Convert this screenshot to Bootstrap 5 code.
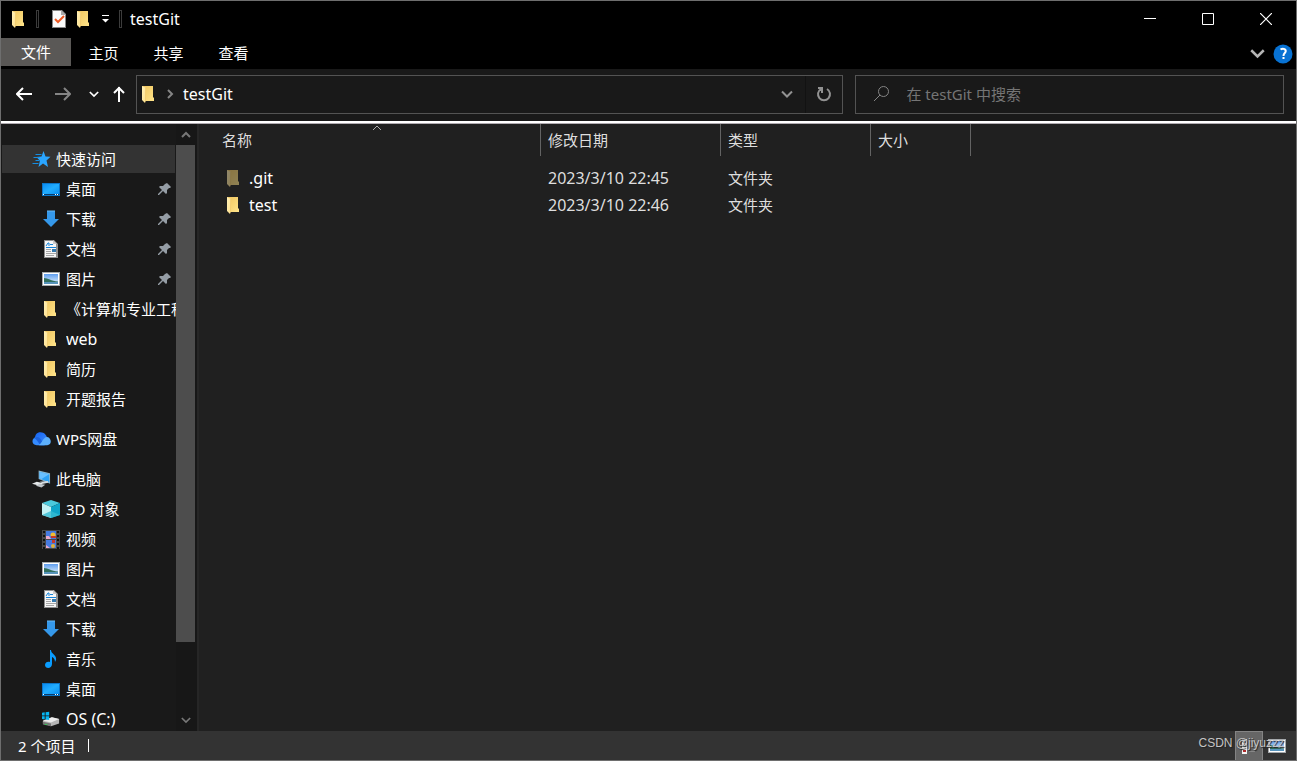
<!DOCTYPE html>
<html lang="zh-CN">
<head>
<meta charset="utf-8">
<meta name="viewport" content="width=device-width, initial-scale=1">
<title>testGit</title>
<link href="https://cdn.jsdelivr.net/npm/bootstrap@5.3.0/dist/css/bootstrap.min.css" rel="stylesheet">
<style>
body{background:#000;color:#fff;font:15px/20px "Noto Sans","Noto Sans CJK SC",sans-serif}
button{background:none;border:0;padding:0;color:inherit;display:flex;align-items:center;justify-content:center}
a{color:inherit;text-decoration:none}
svg{display:block;flex:none}
.latin{font-size:16px}
.explorer{border:1px solid #6e6e6e}
.titlebar{height:37px;padding:0 1px 1px 0}
.quick{gap:9px}
.title-sep{width:3px;height:18px;border:1px solid #3c3c3c}
.winctl{width:58px;height:36px}
.ribbon{height:31px}
.ribbon-end{padding-right:3px}
.tab{width:65px;height:28px;padding-top:2px}
.tab-file{width:70px;background:#5a5856;padding-top:0}
.toolrow{height:52px;background:#191919;padding-bottom:2px}
.history{gap:14px;padding:0 11px 0 15px}
.forward{margin:0 0 0 9px}
.boxed{height:39px;border:1px solid #535353}
.address{flex:16 1 0}
.search{flex:9 1 0;margin:0 12px}
.search input{background:none;border:0;outline:0;color:#fff;min-width:0}
.search input::placeholder{color:#757575;opacity:1}
.refresh{width:37px;border-left:1px solid #121212}
.rule{height:3px;background:#fff;border-bottom:1px solid #b0abb0}
.sidebar{width:198px;background:#191919;border-right:2px solid #262626}
.tree{padding:20px 0 0 1px}
.entry{height:30px;white-space:nowrap}
.entry.root{padding-left:30px}
.entry.sub{padding-left:40px}
.entry.current{background:#333;height:28px;margin:1px 1px 1px 0}
.entry .label{flex:1 1 0;min-width:0;overflow:hidden}
.entry.root svg:first-child{margin-right:5px}
.entry.sub svg:first-child{margin-right:6px}
.section{margin-bottom:10px}
.scroll{width:21px;background:#171717;padding-right:2px}
.scroll button{width:100%;height:21px}
.thumb{height:88%;background:#4d4d4d}
.pane{background:#202020;padding-left:15px}
.files{border-collapse:separate;border-spacing:0;table-layout:fixed;width:757px}
.files th{font-weight:400;color:#dedede;height:32px;padding:0 0 0 7px;border-right:1px solid #636363;position:relative}
.files th:first-child,.files td:first-child{padding-left:8px}
.files th svg{position:absolute;top:0;left:50%;transform:translateX(-50%)}
.files tbody::before{content:"";display:block;height:8px}
.files td{height:27px;padding:0 0 0 7px;color:#dedede}
.files td a{color:#fff}
.files td svg{margin:0 6px 0 3px}
.hidden-item svg{opacity:.5}
.status{height:29px;background:#333;padding:0 5px 0 17px}
.status-sep{width:1px;height:13px;margin-left:13px;background:#fff}
.view{width:28px;height:29px}
.view.on{background:#666;border:1px solid #848484;border-bottom:0}
.watermark{position:absolute;right:12px;top:2px;font:12px/20px "Liberation Sans",sans-serif;color:#c4c4c4;text-shadow:1px 1px 1px #222;pointer-events:none}
</style>
<script src="https://cdn.jsdelivr.net/npm/bootstrap@5.3.0/dist/js/bootstrap.bundle.min.js"></script>
</head>
<body>
<svg width="0" height="0" class="position-absolute" aria-hidden="true">
<defs>
<linearGradient id="gf" x2="1" y2="1"><stop stop-color="#fff0b8"/><stop offset="1" stop-color="#ffe08a"/></linearGradient>
<linearGradient id="gb" x2="1" y2="1"><stop stop-color="#f0c55e"/><stop offset="1" stop-color="#ffe48a"/></linearGradient>
<linearGradient id="gd" x2="1" y2="1"><stop stop-color="#0a8cf0"/><stop offset=".5" stop-color="#22adff"/><stop offset="1" stop-color="#0a90f0"/></linearGradient>
<linearGradient id="gs" x2="0" y2="1"><stop stop-color="#5f9ef0"/><stop offset="1" stop-color="#e8f6ff"/></linearGradient>
<linearGradient id="gc" x2="1" y2="1"><stop stop-color="#1463f0"/><stop offset="1" stop-color="#3f8cff"/></linearGradient>
</defs>
<symbol id="folder" viewBox="0 0 18 18"><path d="M2 1h11v11l1 1v3H4z" fill="url(#gb)"/><path d="M2 1l4 2v12l-1 3-3-3z" fill="url(#gf)"/><path d="M5 3h1v12l-1 2z" fill="#e9b950" opacity=".5"/></symbol>
<symbol id="star" viewBox="0 0 18 18"><path d="M11 1l2 5.500 5 .3-4 3.800 1.500 6.400-5-3.500-4.500 3.500 1.400-6.200L4 7l5-.5z" fill="#2aa5ff"/><path d="M3 4.500h6M1 7.500h6M3 10.500h4M0 13.500h6" stroke="#168de0"/></symbol>
<symbol id="desktop" viewBox="0 0 18 18"><path d="M0 3h18v13H0z" fill="#0b76c9"/><path d="M1 4h16v10H1z" fill="url(#gd)"/><path d="M1 14.500h16" stroke="#073b6c"/><path d="M1 14.500h1m11 0h1m1 0h1" stroke="#fff"/></symbol>
<symbol id="download" viewBox="0 0 18 18"><path d="M5 1h8v8h4l-8 8-8-8h4z" fill="#3598ea"/><path d="M5 1h8" stroke="#69b9f5"/></symbol>
<symbol id="document" viewBox="0 0 18 18"><path d="M2 0h10l4 4v14H2z" fill="#8e8e8e"/><path d="M3 1h8l3 3v13H3z" fill="#f7f7f7"/><path d="M11 0l4 4h-4z" fill="#c9c9c9"/><path d="M4 6l2-3h1v3M8 4.500h3M4 7.500h10" stroke="#1683d8" fill="none"/><path d="M4 9.500h5M4 11.500h5M4 13.500h10M4 15.500h8" stroke="#a6a6a6"/><path d="M10 9h4v3h-4z" fill="#377aad"/></symbol>
<symbol id="picture" viewBox="0 0 18 18"><path d="M0 2h18v14H0z" fill="#a5a9ac"/><path d="M1 3h16v12H1z" fill="#fff"/><path d="M2 4h14v10H2z" fill="url(#gs)"/><path d="M2 8c4 0 7 3 14 3.500v1H2z" fill="#32705e"/><path d="M2 12h14v2H2z" fill="#5794bc"/></symbol>
<symbol id="cloud" viewBox="0 0 20 18"><path d="M3 10C3 4 5 2 9 2c4 0 6 3 7 6l-5 7H6z" fill="url(#gc)"/><path d="M5 15.500c-6 0-6-8 0-9 3 0 4 2 8 9z" fill="#348bff"/><path d="M5 6.500c4 0 5 5 9 9H9C7 14 6 10 2 8z" fill="#1b62dd"/><path d="M7 15.500c3-1 5-9 9-8.500 5 1 5 8.500 0 8.500z" fill="#5db0fc"/></symbol>
<symbol id="pc" viewBox="0 0 20 18"><path d="M7 0l12 3v11L7 9z" fill="#8ab4cb"/><path d="M8 1.500L18 4v8.500L8 8.500z" fill="#2ea2f5"/><path d="M8 1.500L18 4l-8 5-2-.5z" fill="#69c0ff"/><path d="M0 14l5-2 7 1.500L8 16z" fill="#e6e9eb"/><path d="M4 16l4-2 6 1-4 3z" fill="#bfc5c9"/><path d="M8 12l9-1v2l-5 1z" fill="#d5dce0"/></symbol>
<symbol id="cube" viewBox="0 0 18 18"><path d="M9 0l9 3-9 4-9-4z" fill="#4bc9dc"/><path d="M0 3l9 4v11l-9-3z" fill="#c2f2f4"/><path d="M9 7l9-4v12l-9 3z" fill="#10a5c9"/><path d="M0 15l9-4 9 4-9 3z" fill="#36bcd2" opacity=".8"/></symbol>
<symbol id="video" viewBox="0 0 18 19"><path d="M0 0h18v19H0z" fill="#484848"/><path d="M4 1h10v8H4zm0 9h10v8H4z" fill="#467be0"/><path d="M2 1v18M16 1v18" stroke="#111" stroke-width="2" stroke-dasharray="2 2"/><circle cx="11" cy="5" r="2.500" fill="#f3bd2d"/><path d="M9 6h5v2H9zM10 10h3v3h-3z" fill="#c5382b"/><path d="M4 6h3l2 3H4zM4 15l4 3H4z" fill="#e8a8cb"/><circle cx="11" cy="16" r="2" fill="#e1b138"/></symbol>
<symbol id="music" viewBox="0 0 18 18"><path d="M9 0c0 4 6 5 5 10l-1 2c0-4-3-5-3-5v7c0 5-7 5-7 1 0-3 3-4 5-3V0z" fill="#0a9dff"/></symbol>
<symbol id="drive" viewBox="0 0 20 18"><path d="M1 11l10-4 8 2v5l-9 3-9-3z" fill="#b6b6b6"/><path d="M1 11l10-4 8 2-9 4z" fill="#ededed"/><path d="M1 12l9 2v3l-9-2z" fill="#757575"/><path d="M3 15h3" stroke="#35cf58"/><path d="M0 2l3-.5V5H0zm4-.5L8 1v4H4zM0 6h3v3.500L0 9zm4 0h4v4l-4-.5z" fill="#06b6f3"/></symbol>
<symbol id="pin" viewBox="0 0 14 14"><path d="M9 1l4 4-1 1-1 0-2 2v3l-1 1-3-3-4 4-1 0 0-1 4-4-3-3 1-1h3l2-2V2z" fill="#959da5"/></symbol>
<symbol id="down" viewBox="0 0 12 8"><path d="M1 1l5 5 5-5" fill="none" stroke="currentColor" stroke-width="2"/></symbol>
</svg>

<main class="explorer vh-100 d-flex flex-column overflow-hidden">
<header class="titlebar d-flex align-items-center flex-shrink-0">
  <div class="quick d-flex align-items-center ps-2">
    <svg width="18" height="18" viewBox="-1 0 18 18"><use href="#folder" width="18" height="18"/></svg>
    <span class="title-sep me-1"></span>
    <button aria-label="属性"><svg width="14" height="18" viewBox="0 0 14 18"><path d="M0 0h10l4 4v14H0z" fill="#858585"/><path d="M1 1h8l4 4v12H1z" fill="#fafafa"/><path d="M9 0l5 5H9z" fill="#aaa"/><path d="M3 9l3 3 6-6" fill="none" stroke="#ee5a24" stroke-width="2"/></svg></button>
    <button aria-label="新建文件夹"><svg width="16" height="18" viewBox="0 0 16 18"><use href="#folder" width="18" height="18"/></svg></button>
    <button aria-label="自定义快速访问工具栏"><svg width="10" height="8" viewBox="0 0 10 8"><path d="M2 .5h7" stroke="#fff"/><path d="M2 4h7L5.500 7.500z" fill="#fff"/></svg></button>
    <span class="title-sep"></span>
  </div>
  <span class="latin ms-2">testGit</span>
  <div class="ms-auto d-flex">
    <button class="winctl" aria-label="最小化"><svg width="12" height="12"><path d="M0 5.500h12" stroke="#fff"/></svg></button>
    <button class="winctl" aria-label="最大化"><svg width="12" height="12"><path d="M.5.5h11v11H.5z" fill="none" stroke="#fff"/></svg></button>
    <button class="winctl" aria-label="关闭"><svg width="12" height="12"><path d="M0 0l12 12M12 0L0 12" stroke="#fff" stroke-width="1.200"/></svg></button>
  </div>
</header>
<nav class="ribbon d-flex align-items-start flex-shrink-0" aria-label="功能区">
  <button class="tab tab-file">文件</button><button class="tab">主页</button><button class="tab">共享</button><button class="tab">查看</button>
  <div class="ribbon-end ms-auto d-flex align-items-center gap-2 h-100">
    <button aria-label="展开功能区"><svg width="15" height="10" color="#b5b5b5"><use href="#down"/></svg></button>
    <button aria-label="帮助"><svg width="20" height="20" viewBox="0 0 20 20"><circle cx="10" cy="10" r="9.500" fill="#0872d3"/><path d="M7.500 5.500c3-2 6 0 5 2.500-.5 1.200-2 1.500-2 4M10.500 13v2" fill="none" stroke="#fff" stroke-width="2"/></svg></button>
  </div>
</nav>
<div class="toolrow d-flex align-items-center flex-shrink-0">
  <div class="history d-flex align-items-center">
    <button aria-label="后退"><svg width="16" height="14" viewBox="0 0 16 14"><path d="M16 7H1M7 1L1 7l6 6" fill="none" stroke="#fff" stroke-width="2"/></svg></button>
    <button class="forward" aria-label="前进"><svg width="16" height="14" viewBox="0 0 16 14"><path d="M0 7h15M9 1l6 6-6 6" fill="none" stroke="#858585" stroke-width="2"/></svg></button>
    <button class="ms-1" aria-label="最近浏览的位置"><svg width="10" height="7"><use href="#down"/></svg></button>
    <button aria-label="向上"><svg width="12" height="16" viewBox="0 0 12 16"><path d="M6 16V1M1 7l5-5 5 5" fill="none" stroke="#fff" stroke-width="2"/></svg></button>
  </div>
  <div class="address boxed d-flex align-items-center ps-1">
    <svg class="me-2" width="18" height="18" viewBox="1 0 18 18"><use href="#folder" width="18" height="18"/></svg>
    <svg class="me-2" width="8" height="10"><path d="M1 1l4 4-4 4" fill="none" stroke="#858585" stroke-width="2"/></svg>
    <a class="latin" href="#">testGit</a>
    <button class="ms-auto me-2 px-1" aria-label="以前的位置"><svg width="12" height="9" color="#929292"><use href="#down"/></svg></button>
    <button class="refresh h-100" aria-label="刷新"><svg width="16" height="16" viewBox="0 0 16 16"><path d="M11 3a6 6 0 1 1-6 0M2 2h4v5" fill="none" stroke="#929292" stroke-width="2"/></svg></button>
  </div>
  <div class="search boxed d-flex align-items-center px-3">
    <svg class="me-3" width="18" height="18" viewBox="0 0 18 18"><path d="M2 16l6-6" stroke="#858585"/><circle cx="11.500" cy="6.500" r="5" fill="none" stroke="#858585"/></svg>
    <input class="flex-grow-1 p-0" type="search" aria-label="搜索" placeholder="在 testGit 中搜索">
  </div>
</div>
<div class="rule flex-shrink-0"></div>
<div class="d-flex flex-grow-1 overflow-hidden">
  <aside class="sidebar d-flex flex-shrink-0 h-100">
    <nav class="tree flex-grow-1 overflow-hidden" aria-label="导航窗格">
      <div class="section">
        <a href="#" class="entry root current d-flex align-items-center"><svg width="19" height="18"><use href="#star"/></svg><span class="label">快速访问</span></a>
        <a href="#" class="entry sub d-flex align-items-center"><svg width="18" height="18"><use href="#desktop"/></svg><span class="label">桌面</span><svg class="me-1" width="14" height="14"><use href="#pin"/></svg></a>
        <a href="#" class="entry sub d-flex align-items-center"><svg width="18" height="18"><use href="#download"/></svg><span class="label">下载</span><svg class="me-1" width="14" height="14"><use href="#pin"/></svg></a>
        <a href="#" class="entry sub d-flex align-items-center"><svg width="18" height="18"><use href="#document"/></svg><span class="label">文档</span><svg class="me-1" width="14" height="14"><use href="#pin"/></svg></a>
        <a href="#" class="entry sub d-flex align-items-center"><svg width="18" height="18"><use href="#picture"/></svg><span class="label">图片</span><svg class="me-1" width="14" height="14"><use href="#pin"/></svg></a>
        <a href="#" class="entry sub d-flex align-items-center"><svg width="18" height="18"><use href="#folder"/></svg><span class="label">《计算机专业工程</span></a>
        <a href="#" class="entry sub d-flex align-items-center"><svg width="18" height="18"><use href="#folder"/></svg><span class="label latin">web</span></a>
        <a href="#" class="entry sub d-flex align-items-center"><svg width="18" height="18"><use href="#folder"/></svg><span class="label">简历</span></a>
        <a href="#" class="entry sub d-flex align-items-center"><svg width="18" height="18"><use href="#folder"/></svg><span class="label">开题报告</span></a>
      </div>
      <div class="section">
        <a href="#" class="entry root d-flex align-items-center"><svg width="19" height="18"><use href="#cloud"/></svg><span class="label">WPS网盘</span></a>
      </div>
      <div class="section">
        <a href="#" class="entry root d-flex align-items-center"><svg width="19" height="18"><use href="#pc"/></svg><span class="label">此电脑</span></a>
        <a href="#" class="entry sub d-flex align-items-center"><svg width="18" height="18"><use href="#cube"/></svg><span class="label">3D 对象</span></a>
        <a href="#" class="entry sub d-flex align-items-center"><svg width="18" height="19"><use href="#video"/></svg><span class="label">视频</span></a>
        <a href="#" class="entry sub d-flex align-items-center"><svg width="18" height="18"><use href="#picture"/></svg><span class="label">图片</span></a>
        <a href="#" class="entry sub d-flex align-items-center"><svg width="18" height="18"><use href="#document"/></svg><span class="label">文档</span></a>
        <a href="#" class="entry sub d-flex align-items-center"><svg width="18" height="18"><use href="#download"/></svg><span class="label">下载</span></a>
        <a href="#" class="entry sub d-flex align-items-center"><svg width="18" height="18"><use href="#music"/></svg><span class="label">音乐</span></a>
        <a href="#" class="entry sub d-flex align-items-center"><svg width="18" height="18"><use href="#desktop"/></svg><span class="label">桌面</span></a>
        <a href="#" class="entry sub d-flex align-items-center"><svg width="18" height="18"><use href="#drive"/></svg><span class="label latin">OS (C:)</span></a>
      </div>
    </nav>
    <div class="scroll d-flex flex-column flex-shrink-0">
      <button aria-label="向上滚动"><svg width="10" height="7"><path d="M1 6l4-4 4 4" fill="none" stroke="#777" stroke-width="2"/></svg></button>
      <div class="flex-grow-1"><div class="thumb"></div></div>
      <button aria-label="向下滚动"><svg width="10" height="7" color="#777"><use href="#down"/></svg></button>
    </div>
  </aside>
  <section class="pane flex-grow-1 overflow-hidden">
    <table class="files">
      <colgroup><col style="width:327px"><col style="width:180px"><col style="width:150px"><col style="width:100px"></colgroup>
      <thead><tr><th>名称<svg width="10" height="7"><path d="M1 6l4-4 4 4" fill="none" stroke="#aaa"/></svg></th><th>修改日期</th><th>类型</th><th>大小</th></tr></thead>
      <tbody>
        <tr class="hidden-item"><td><a class="latin d-flex align-items-center" href="#"><svg width="18" height="18"><use href="#folder"/></svg><span>.git</span></a></td><td class="latin">2023/3/10 22:45</td><td>文件夹</td><td></td></tr>
        <tr><td><a class="latin d-flex align-items-center" href="#"><svg width="18" height="18"><use href="#folder"/></svg><span>test</span></a></td><td class="latin">2023/3/10 22:46</td><td>文件夹</td><td></td></tr>
      </tbody>
    </table>
  </section>
</div>
<footer class="status d-flex align-items-center position-relative flex-shrink-0">
  <span>2 个项目</span><span class="status-sep"></span>
  <div class="ms-auto d-flex">
    <button class="view on" aria-label="详细信息"><svg width="16" height="16"><path d="M1 1h5v15H1z" fill="#f4f4f4"/><path d="M2 3h3v2H2zM2 7h3v2H2z" fill="#6b7c88"/><path d="M2 12h3v2H2z" fill="#b32b2b"/><path d="M8 3.500h6M8 8.500h6M8 13.500h6" stroke="#888"/></svg></button>
    <button class="view" aria-label="大图标"><svg width="18" height="18"><use href="#picture"/></svg></button>
  </div>
  <span class="watermark">CSDN @jiyuzzz</span>
</footer>
</main>
</body>
</html>
